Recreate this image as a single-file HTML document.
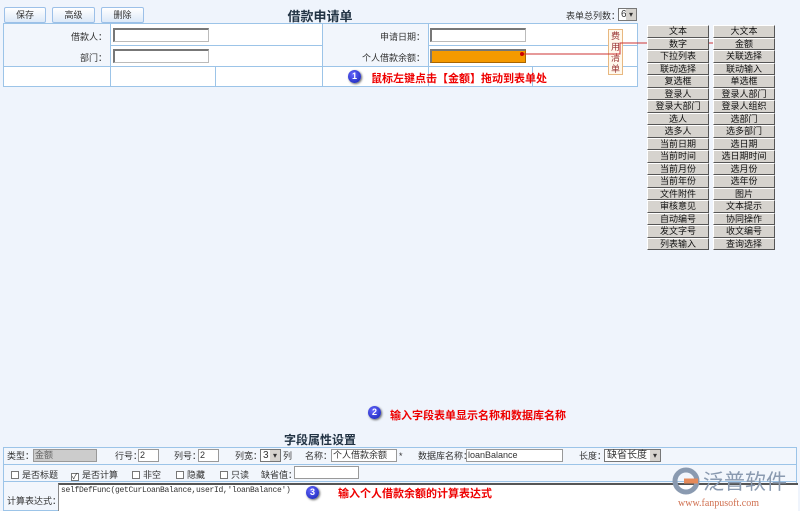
<!DOCTYPE html><html><head><meta charset="utf-8"><style>
*{margin:0;padding:0;box-sizing:border-box}
body{width:800px;height:511px;background:#eff4fc;position:relative;overflow:hidden;font-family:"Liberation Sans","Noto Sans CJK SC",sans-serif;font-size:9px;color:#333}
.a{position:absolute}
.btn{position:absolute;height:16px;border:1px solid #9cc0e8;background:linear-gradient(#fff,#dce9f8);border-radius:2px;text-align:center;line-height:14px;font-size:9px}
.inp{position:absolute;height:14px;background:#fff;border:1px solid #bbb;border-top:2px solid #777;border-left:2px solid #777}
.grid{position:absolute;left:647px;top:25px;width:130px;height:225px;display:grid;grid-template-columns:62px 62px;column-gap:4px;grid-template-rows:repeat(18,1fr);row-gap:0}
.rb{background:#d6d3ce;border:1px solid;border-color:#fff #555 #555 #fff;text-align:center;line-height:10px;font-size:9px;color:#111;overflow:hidden}
.red{color:#e00;font-weight:bold;font-size:11px}
.num{position:absolute;width:13px;height:13px;border-radius:50%;background:radial-gradient(circle at 40% 35%,#66f,#1020b0);color:#fff;font-size:9px;text-align:center;line-height:13px;font-weight:bold;box-shadow:1px 1px 2px #666}
.sel{position:absolute;height:13px;background:#fff;border:1px solid #777;font-size:10px;line-height:11px;padding-left:2px}
.sel:after{content:"▾";position:absolute;right:0;top:0;width:10px;height:11px;background:#d6d3ce;font-size:8px;text-align:center}
.cb{display:inline-block;width:8px;height:8px;border:1px solid #777;background:#fff;vertical-align:-1px;margin-right:3px;font-size:8px;line-height:6px}
.l{position:absolute;top:450px;line-height:12px}
.bi{position:absolute;top:449px;height:13px;background:#fff;border:1px solid #999;line-height:11px;padding-left:1px;font-size:9px}
</style></head><body>
<div class="btn" style="left:4px;top:7px;width:42px">保存</div>
<div class="btn" style="left:52px;top:7px;width:43px">高级</div>
<div class="btn" style="left:101px;top:7px;width:43px">删除</div>
<div class="a" style="left:270px;top:6px;width:100px;text-align:center;font-size:13px;font-weight:bold;color:#234">借款申请单</div>
<div class="a" style="left:566px;top:9px;font-size:9px">表单总列数：</div>
<div class="sel" style="left:618px;top:8px;width:19px">6</div>
<div class="a" style="left:3px;top:23px;width:635px;height:64px;background:#fff;border:1px solid #9cc4e8"></div>
<div class="a" style="left:3px;top:45px;width:635px;height:1px;background:#9cc4e8"></div>
<div class="a" style="left:3px;top:66px;width:635px;height:1px;background:#9cc4e8"></div>
<div class="a" style="left:4px;top:24px;width:106px;height:42px;background:#f2f6fc"></div>
<div class="a" style="left:323px;top:24px;width:105px;height:42px;background:#f2f6fc"></div>
<div class="a" style="left:110px;top:23px;width:1px;height:64px;background:#9cc4e8"></div>
<div class="a" style="left:322px;top:23px;width:1px;height:64px;background:#9cc4e8"></div>
<div class="a" style="left:428px;top:23px;width:1px;height:64px;background:#9cc4e8"></div>
<div class="a" style="left:215px;top:66px;width:1px;height:21px;background:#9cc4e8"></div>
<div class="a" style="left:532px;top:66px;width:1px;height:21px;background:#9cc4e8"></div>
<div class="a" style="left:50px;top:30px;width:57px;text-align:right">借款人：</div>
<div class="a" style="left:50px;top:51px;width:57px;text-align:right">部门：</div>
<div class="a" style="left:330px;top:30px;width:95px;text-align:right">申请日期：</div>
<div class="a" style="left:330px;top:51px;width:95px;text-align:right">个人借款余额：</div>
<div class="inp" style="left:113px;top:28px;width:96px"></div>
<div class="inp" style="left:113px;top:49px;width:96px"></div>
<div class="inp" style="left:430px;top:28px;width:96px"></div>
<div class="a" style="left:430px;top:49px;width:96px;height:14px;background:#f59a00;border:1px solid #a60;border-top:2px solid #777;border-left:2px solid #777"></div>
<div class="a" style="left:608px;top:29px;width:15px;height:46px;border:1px solid #e8b880;background:#fff8ec;color:#933;font-size:9px;line-height:11px;text-align:center;padding-top:1px">费<br>用<br>清<br>单</div>
<svg class="a" style="left:0;top:0" width="800" height="100"><polyline points="522,54 620,54 620,43 721,43" fill="none" stroke="#c33" stroke-width="1"/><circle cx="522" cy="54" r="2" fill="#c00"/><circle cx="721" cy="43" r="2" fill="#c00"/></svg>
<div class="num" style="left:348px;top:70px">1</div>
<div class="a red" style="left:371px;top:70px">鼠标左键点击【金额】拖动到表单处</div>
<div class="grid">
<div class="rb">文本</div><div class="rb">大文本</div>
<div class="rb">数字</div><div class="rb">金额</div>
<div class="rb">下拉列表</div><div class="rb">关联选择</div>
<div class="rb">联动选择</div><div class="rb">联动输入</div>
<div class="rb">复选框</div><div class="rb">单选框</div>
<div class="rb">登录人</div><div class="rb">登录人部门</div>
<div class="rb">登录大部门</div><div class="rb">登录人组织</div>
<div class="rb">选人</div><div class="rb">选部门</div>
<div class="rb">选多人</div><div class="rb">选多部门</div>
<div class="rb">当前日期</div><div class="rb">选日期</div>
<div class="rb">当前时间</div><div class="rb">选日期时间</div>
<div class="rb">当前月份</div><div class="rb">选月份</div>
<div class="rb">当前年份</div><div class="rb">选年份</div>
<div class="rb">文件附件</div><div class="rb">图片</div>
<div class="rb">审核意见</div><div class="rb">文本提示</div>
<div class="rb">自动编号</div><div class="rb">协同操作</div>
<div class="rb">发文字号</div><div class="rb">收文编号</div>
<div class="rb">列表输入</div><div class="rb">查询选择</div>
</div>
<div class="num" style="left:368px;top:406px">2</div>
<div class="a red" style="left:390px;top:407px">输入字段表单显示名称和数据库名称</div>
<div class="a" style="left:270px;top:431px;width:100px;text-align:center;font-size:12px;font-weight:bold;color:#234">字段属性设置</div>
<div class="a" style="left:3px;top:447px;width:794px;height:64px;border:1px solid #9cc4e8;background:#f2f6fc"></div>
<div class="a" style="left:3px;top:464px;width:794px;height:1px;background:#9cc4e8"></div>
<div class="a" style="left:3px;top:481px;width:794px;height:1px;background:#9cc4e8"></div>
<div class="l" style="left:7px">类型：</div>
<div class="bi" style="left:33px;width:64px;background:#ccc;color:#666">金额</div>
<div class="l" style="left:115px">行号：</div><div class="bi" style="left:138px;width:21px">2</div>
<div class="l" style="left:174px">列号：</div><div class="bi" style="left:198px;width:21px">2</div>
<div class="l" style="left:235px">列宽：</div><div class="sel" style="left:260px;top:449px;width:21px">3</div><div class="l" style="left:283px">列</div>
<div class="l" style="left:305px">名称：</div><div class="bi" style="left:331px;width:66px">个人借款余额</div><div class="l" style="left:399px">*</div>
<div class="l" style="left:418px">数据库名称：</div><div class="bi" style="left:466px;width:97px">loanBalance</div>
<div class="l" style="left:579px">长度：</div><div class="sel" style="left:604px;top:449px;width:57px">缺省长度</div>
<div class="a" style="left:11px;top:468px"><span class="cb"></span>是否标题</div>
<div class="a" style="left:71px;top:468px"><span class="cb">✓</span>是否计算</div>
<div class="a" style="left:132px;top:468px"><span class="cb"></span>非空</div>
<div class="a" style="left:176px;top:468px"><span class="cb"></span>隐藏</div>
<div class="a" style="left:220px;top:468px"><span class="cb"></span>只读</div>
<div class="a" style="left:261px;top:468px">缺省值：</div><div class="bi" style="left:294px;top:466px;width:65px"></div>
<div class="a" style="left:7px;top:494px">计算表达式：</div>
<div class="a" style="left:58px;top:483px;width:740px;height:28px;background:#fff;border-top:2px solid #555;border-left:1px solid #888;font-family:'Liberation Mono',monospace;font-size:8px;letter-spacing:-0.3px;white-space:nowrap;padding:1px 2px">selfDefFunc(getCurLoanBalance,userId,'loanBalance')</div>
<div class="num" style="left:306px;top:486px">3</div>
<div class="a red" style="left:338px;top:485px">输入个人借款余额的计算表达式</div>
<svg class="a" style="left:668px;top:465px" width="132" height="46"><circle cx="18" cy="16" r="11" fill="none" stroke="#8a9ab0" stroke-width="5"/><path d="M16 16 L30 16" stroke="#e58a5a" stroke-width="5"/><text x="35" y="24" font-family="Noto Sans CJK SC" font-size="21" fill="#8a9ab0">泛普软件</text><text x="10" y="41" font-family="Liberation Serif" font-size="10" fill="#d07050">www.fanpusoft.com</text></svg>
</body></html>
